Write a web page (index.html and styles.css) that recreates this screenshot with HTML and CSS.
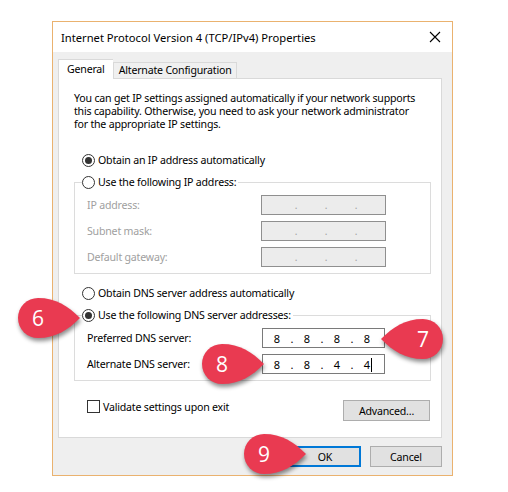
FILE: index.html
```html
<!DOCTYPE html>
<html lang="en">
<head>
    <meta charset="UTF-8">
    <meta name="viewport" content="width=device-width, initial-scale=1.0">
    <title>Internet Protocol Version 4 (TCP/IPv4) Properties</title>
    <link rel="stylesheet" href="styles.css">
</head>
<body>
    <div class="page">
        <div class="dialog">
            <div class="titlebar">
                <span class="title">Internet Protocol Version 4 (TCP/IPv4) Properties</span>
                <svg class="close" width="12" height="12" viewBox="0 0 12 12">
                    <path d="M1 1 L11 11 M11 1 L1 11" stroke="#000" stroke-width="1.1" fill="none"/>
                </svg>
            </div>

            <div class="client">
                <div class="tabs">
                    <div class="tab active">General</div>
                    <div class="tab">Alternate Configuration</div>
                </div>

                <div class="panel">
                    <p class="intro">You can get IP settings assigned automatically if your network supports<br>this capability. Otherwise, you need to ask your network administrator<br>for the appropriate IP settings.</p>

                    <div class="option"><span class="radio checked"></span>Obtain an IP address automatically</div>

                    <div class="group">
                        <div class="legend"><span class="radio"></span>Use the following IP address:</div>
                        <div class="row disabled">
                            <span class="label">IP address:</span>
                            <div class="ipbox"><span></span><i>.</i><span></span><i>.</i><span></span><i>.</i><span></span></div>
                        </div>
                        <div class="row disabled">
                            <span class="label">Subnet mask:</span>
                            <div class="ipbox"><span></span><i>.</i><span></span><i>.</i><span></span><i>.</i><span></span></div>
                        </div>
                        <div class="row disabled">
                            <span class="label">Default gateway:</span>
                            <div class="ipbox"><span></span><i>.</i><span></span><i>.</i><span></span><i>.</i><span></span></div>
                        </div>
                    </div>

                    <div class="option spaced"><span class="radio"></span>Obtain DNS server address automatically</div>

                    <div class="group">
                        <div class="legend"><span class="radio checked"></span>Use the following DNS server addresses:</div>
                        <div class="row dns">
                            <span class="label">Preferred DNS server:</span>
                            <div class="ipbox"><span>8</span><i>.</i><span>8</span><i>.</i><span>8</span><i>.</i><span>8</span></div>
                        </div>
                        <div class="row dns">
                            <span class="label">Alternate DNS server:</span>
                            <div class="ipbox"><span>8</span><i>.</i><span>8</span><i>.</i><span>4</span><i>.</i><span class="caret">4</span></div>
                        </div>
                    </div>

                    <div class="footer">
                        <div class="check"><span class="box"></span>Validate settings upon exit</div>
                        <button class="btn advanced">Advanced...</button>
                    </div>
                </div>

                <div class="actions">
                    <button class="btn default">OK</button>
                    <button class="btn">Cancel</button>
                </div>
            </div>
        </div>

        <div class="badge" style="left: 16px; top: 296px;">
            <svg width="70" height="46" viewBox="0 0 70 46"><path d="M64 22 C52 10 40 2 22 2 A20 20 0 0 0 22 42 C40 42 52 34 64 22 Z"/></svg>
            <span>6</span>
        </div>
        <div class="badge flip" style="left: 375px; top: 317px;">
            <svg width="70" height="46" viewBox="0 0 70 46"><path d="M64 22 C52 10 40 2 22 2 A20 20 0 0 0 22 42 C40 42 52 34 64 22 Z"/></svg>
            <span>7</span>
        </div>
        <div class="badge" style="left: 200px; top: 342px;">
            <svg width="70" height="46" viewBox="0 0 70 46"><path d="M64 22 C52 10 40 2 22 2 A20 20 0 0 0 22 42 C40 42 52 34 64 22 Z"/></svg>
            <span>8</span>
        </div>
        <div class="badge" style="left: 242px; top: 432px;">
            <svg width="70" height="46" viewBox="0 0 70 46"><path d="M64 22 C52 10 40 2 22 2 A20 20 0 0 0 22 42 C40 42 52 34 64 22 Z"/></svg>
            <span>9</span>
        </div>
    </div>
</body>
</html>
```

FILE: styles.css
```css
body {
    margin: 0;
    background-color: #ffffff;
    font-family: "Noto Sans", "Open Sans", sans-serif;
    font-size: 10.6px;
    letter-spacing: -0.2px;
    color: #000000;
}
.page {
    position: relative;
    width: 508px;
    height: 492px;
    padding: 21px 0 0 52px;
    box-sizing: border-box;
}
.dialog {
    width: 401px;
    height: 455px;
    border: 1px solid #eab26f;
    box-sizing: border-box;
    background-color: #efefef;
    display: flex;
    flex-direction: column;
}
.titlebar {
    height: 30px;
    background-color: #ffffff;
    display: flex;
    align-items: center;
    justify-content: space-between;
    padding: 0 11px 0 8px;
}
.title {
    font-size: 11.2px;
    letter-spacing: 0;
}
.client {
    padding: 7px 10px 0 5px;
}
.tabs {
    display: flex;
    align-items: flex-end;
    height: 19px;
}
.tab {
    height: 16px;
    line-height: 15px;
    padding: 0 4px 0 5px;
    border: 1px solid #d9d9d9;
    border-bottom: none;
    box-sizing: border-box;
    background-color: #f0f0f0;
}
.tab.active {
    height: 20px;
    line-height: 18px;
    padding: 0 8px;
    background-color: #ffffff;
    margin-bottom: -1px;
    position: relative;
    z-index: 1;
    border-right: none;
}
.panel {
    background-color: #ffffff;
    border: 1px solid #d9d9d9;
    padding: 13px 10px 14px 15px;
    height: 360px;
    box-sizing: border-box;
}
.intro {
    margin: 0;
    line-height: 13px;
    white-space: nowrap;
}
.option, .legend {
    display: flex;
    align-items: center;
    height: 18px;
    padding-left: 8px;
}
.option {
    margin-top: 20px;
}
.option.spaced {
    margin-top: 10px;
}
.radio {
    width: 13px;
    height: 13px;
    border: 1px solid #333333;
    border-radius: 50%;
    box-sizing: border-box;
    margin-right: 3px;
    display: flex;
    align-items: center;
    justify-content: center;
    background-color: #ffffff;
}
.radio.checked::after {
    content: "";
    width: 7px;
    height: 7px;
    border-radius: 50%;
    background-color: #333333;
}
.group {
    margin-top: 13px;
    border: 1px solid #dcdcdc;
    padding: 0 0 6px 12px;
}
.legend {
    margin-top: -10px;
    margin-left: -12px;
    padding-left: 7px;
    padding-right: 2px;
    width: max-content;
    background: linear-gradient(to right, transparent 7px, #ffffff 7px);
}
.row {
    display: flex;
    align-items: center;
    margin-top: 6px;
}
.group .legend + .row {
    margin-top: 4px;
}
.label {
    width: 174px;
}
.ipbox {
    width: 125px;
    height: 20px;
    border: 1px solid #7a7a7a;
    box-sizing: border-box;
    display: flex;
    align-items: center;
    padding-left: 7px;
    background-color: #ffffff;
    font-size: 11px;
    letter-spacing: 0;
}
.ipbox span {
    width: 16px;
    text-align: center;
}
.ipbox i {
    font-style: normal;
    width: 14px;
    text-align: center;
}
.disabled .label {
    color: #a0a0a0;
}
.disabled .ipbox {
    background-color: #ececec;
    border-color: #8f8f8f;
    color: #a0a0a0;
    font-size: 10px;
    padding-left: 11px;
}
.dns .label {
    width: 175px;
}
.dns .ipbox {
    width: 123px;
    padding-left: 6px;
}
.caret {
    position: relative;
}
.caret::after {
    content: "";
    position: absolute;
    right: 3px;
    top: 1px;
    width: 1px;
    height: 14px;
    background-color: #000000;
}
.footer {
    display: flex;
    justify-content: space-between;
    align-items: flex-start;
    margin-top: 19px;
}
.check {
    display: flex;
    align-items: center;
    height: 13px;
    padding-left: 13px;
}
.box {
    width: 13px;
    height: 13px;
    border: 1px solid #333333;
    box-sizing: border-box;
    margin-right: 3px;
}
.btn {
    font-family: inherit;
    font-size: 10.6px;
    letter-spacing: -0.2px;
    height: 21px;
    background-color: #e1e1e1;
    border: 1px solid #adadad;
    padding: 0;
    color: #000000;
}
.advanced {
    width: 87px;
    margin-right: 1px;
}
.actions {
    display: flex;
    justify-content: flex-end;
    gap: 9px;
    margin-top: 8px;
}
.actions .btn {
    width: 72px;
}
.btn.default {
    border: 2px solid #0078d7;
}
.badge {
    position: absolute;
    width: 70px;
    height: 46px;
}
.badge svg {
    display: block;
    fill: #e93a51;
    filter: drop-shadow(1px 3px 2px rgba(0, 0, 0, 0.45));
}
.badge span {
    position: absolute;
    left: 0;
    top: 0;
    width: 44px;
    height: 44px;
    line-height: 44px;
    text-align: center;
    color: #ffffff;
    font-family: "Open Sans", sans-serif;
    font-size: 21px;
    letter-spacing: 0;
}
.badge.flip svg {
    transform: scaleX(-1);
    filter: drop-shadow(-1px 3px 2px rgba(0, 0, 0, 0.45));
}
.badge.flip span {
    left: auto;
    right: 0;
}
```
